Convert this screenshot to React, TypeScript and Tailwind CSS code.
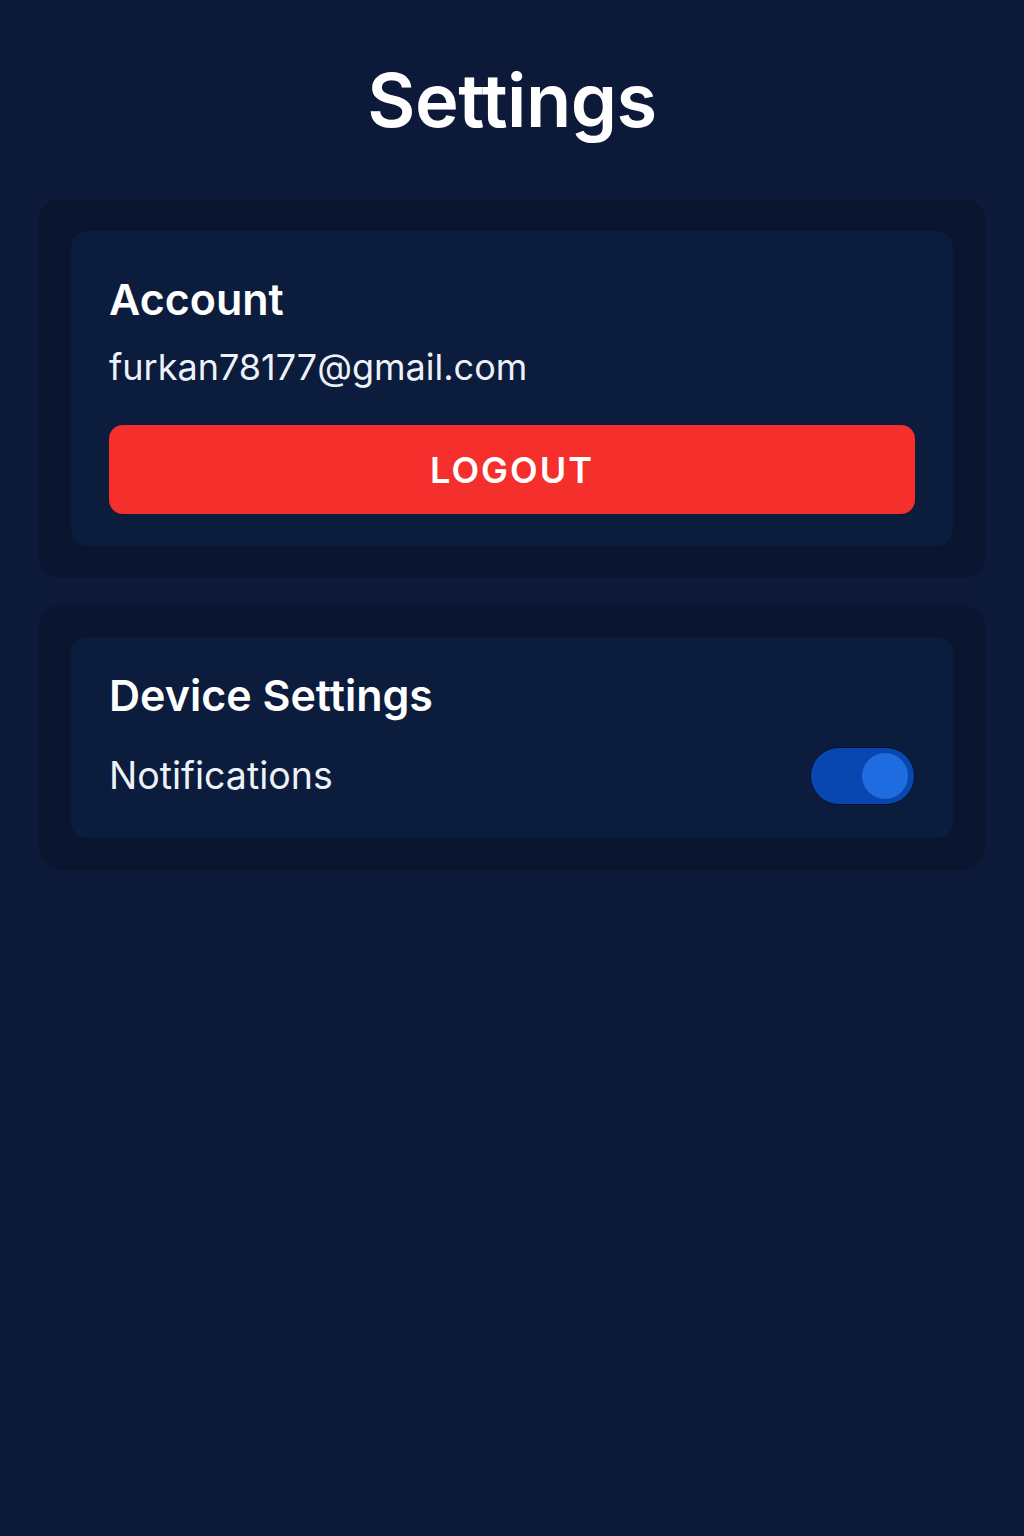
import { useState } from "react"

export default function App() {
  const [notifications, setNotifications] = useState(true)

  return (
    <div className="min-h-screen w-full bg-[#0c1938] font-['Inter',sans-serif] text-white">
      <div className="px-[39px] pt-[52px]">

        <h1 className="text-center text-[74px] font-semibold leading-[96px] tracking-[-0.5px]">
          Settings
        </h1>

        {/* account */}
        <section className="mt-[51px] rounded-[22px] bg-[#0a1530] p-[32px]">
          <div className="rounded-[16px] bg-[#0b1c3d] px-[38px] pt-[40px] pb-[32px]">
            <h2 className="text-[43px] font-semibold leading-[56px]">Account</h2>
            <p className="mt-[16px] text-[36px] leading-[48px] text-[#eef2f8]">furkan78177@gmail.com</p>
            <button className="mt-[34px] flex h-[89px] w-full items-center justify-center rounded-[14px] bg-[#f5302c] text-[36px] font-semibold tracking-[2px] text-white">
              LOGOUT
            </button>
          </div>
        </section>

        {/* device */}
        <section className="mt-[27px] rounded-[22px] bg-[#0a1530] p-[32px]">
          <div className="rounded-[16px] bg-[#0b1c3d] px-[38px] pt-[30px] pb-[33px]">
            <h2 className="text-[43px] font-semibold leading-[56px]">Device Settings</h2>
            <div className="mt-[24px] flex items-center justify-between">
              <span className="text-[37.5px] leading-[48px] text-[#eef2f8]">Notifications</span>
              <button
                onClick={() => setNotifications(!notifications)}
                className="flex h-[58px] w-[105px] items-center rounded-full border border-[#06102a] bg-[#0846b0] px-[6px]"
              >
                <span className={notifications ? "ml-auto h-[46px] w-[46px] rounded-full bg-[#1f6be0]" : "h-[46px] w-[46px] rounded-full bg-[#1f6be0]"} />
              </button>
            </div>
          </div>
        </section>

      </div>
    </div>
  )
}
